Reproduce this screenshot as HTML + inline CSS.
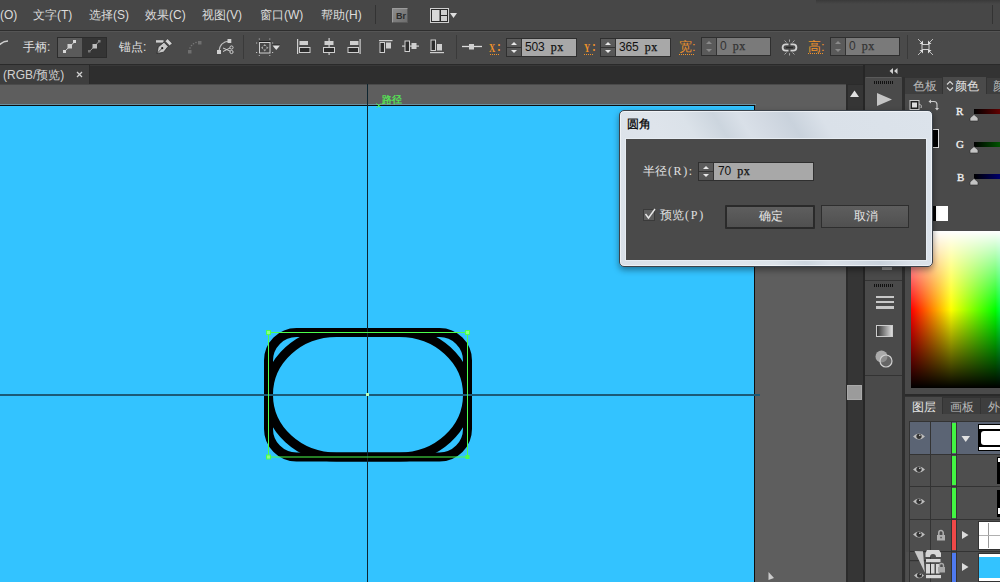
<!DOCTYPE html>
<html><head><meta charset="utf-8">
<style>
*{box-sizing:border-box}
html,body{margin:0;padding:0;width:1000px;height:582px;overflow:hidden;background:#474747;font-family:"Liberation Sans",sans-serif;}
.a{position:absolute}
svg{position:absolute;overflow:visible}
.mi{position:absolute;top:8px;font-size:12px;color:#dcdcdc;line-height:14px;white-space:nowrap}
.lab{position:absolute;font-size:12px;color:#e0e0e0;line-height:14px;white-space:nowrap}
.or{position:absolute;color:#f0922a;font-size:13px;line-height:14px;font-family:"Liberation Mono",monospace;font-weight:bold}
.dots{position:absolute;height:1px;background-image:linear-gradient(90deg,#f0922a 50%,transparent 50%);background-size:2px 1px}
.spin{position:absolute;height:19px;border:1px solid #2f2f2f;background:#a8a8a8}
.spin .b{position:absolute;left:0;top:0;width:15px;height:17px;background:linear-gradient(#5c5c5c 0,#585858 8px,#333 8px,#333 9px,#595959 9px,#555 17px);border-right:1px solid #333}
.spin .b:before{content:"";position:absolute;left:4px;top:3px;width:0;height:0;border-left:3.5px solid transparent;border-right:3.5px solid transparent;border-bottom:3.5px solid #e8e8e8}
.spin .b:after{content:"";position:absolute;left:4px;top:11px;width:0;height:0;border-left:3.5px solid transparent;border-right:3.5px solid transparent;border-top:3.5px solid #e8e8e8}
.spin.dis .b:before{border-bottom-color:#8a8a8a}
.spin.dis .b:after{border-top-color:#8a8a8a}
.spin .t{position:absolute;left:18px;top:1px;font-family:"Liberation Mono",monospace;font-size:12px;letter-spacing:-1px;color:#111;line-height:15px;white-space:pre}
.sep{position:absolute;width:1px;background:#363636}
.ic{fill:#cfcfcf;stroke:none}
</style></head><body>
<!-- ===== menu bar ===== -->
<div class="a" style="left:0;top:0;width:1000px;height:30px;background:#474747"></div>
<div class="a" style="left:0;top:30px;width:1000px;height:1px;background:#2e2e2e"></div>
<div class="a" style="left:0;top:31px;width:1000px;height:1px;background:#555"></div>
<div class="mi" style="left:0">(O)</div>
<div class="mi" style="left:33px">文字(T)</div>
<div class="mi" style="left:89px">选择(S)</div>
<div class="mi" style="left:145px">效果(C)</div>
<div class="mi" style="left:202px">视图(V)</div>
<div class="mi" style="left:260px">窗口(W)</div>
<div class="mi" style="left:321px">帮助(H)</div>
<div class="sep" style="left:375px;top:5px;height:19px;background:#333"></div>
<div class="a" style="left:816px;top:0;width:184px;height:4px;background:linear-gradient(#3a3a3a,#474747)"></div>
<div class="sep" style="left:992px;top:5px;height:19px;background:#333"></div>
<!-- Br -->
<div class="a" style="left:392px;top:8px;width:16px;height:15px;background:linear-gradient(135deg,#8c8c8c,#6e6e6e);border:1px solid #9c9c9c;border-right-color:#5a5a5a;border-bottom-color:#5a5a5a;border-radius:1px"></div>
<div class="a" style="left:396px;top:11px;font-size:9px;line-height:10px;color:#2a2a2a;font-weight:bold">Br</div>
<!-- layout -->
<svg style="left:430px;top:8px" width="30" height="16">
<rect x="0.5" y="0.5" width="18" height="14" fill="#2a2a2a" stroke="#cfcfcf"/>
<rect x="2" y="2" width="7.5" height="11" fill="#d8d8d8"/>
<rect x="11" y="2" width="6" height="5" fill="#cfcfcf"/>
<rect x="11" y="8" width="6" height="5" fill="#cfcfcf"/>
<path d="M20 5 L27 5 L23.5 10 Z" fill="#dedede"/>
</svg>
<!-- ===== control bar ===== -->
<div class="a" style="left:0;top:32px;width:1000px;height:32px;background:#4a4a4a"></div>
<div class="a" style="left:0;top:64px;width:1000px;height:1px;background:#2a2a2a"></div>
<svg style="left:0;top:38px" width="10" height="12"><path d="M-2 8 Q3 3 8 3" stroke="#cfcfcf" stroke-width="1.6" fill="none"/></svg>
<div class="lab" style="left:23px;top:40px">手柄:</div>
<div class="a" style="left:57px;top:37px;width:50px;height:21px;border:1px solid #2c2c2c;background:#353535"></div>
<div class="a" style="left:58px;top:38px;width:24px;height:19px;background:#5a5a5a"></div>
<svg style="left:58px;top:38px" width="50" height="19">
<path d="M6.5 13.5 L17 3.5" stroke="#cfcfcf" stroke-width="1"/>
<rect x="5" y="12" width="3" height="3" fill="#d8d8d8"/><rect x="9.5" y="6" width="4.5" height="4.5" fill="#cfcfcf"/><rect x="15" y="2" width="3" height="3" fill="#d8d8d8"/>
<path d="M31.5 13.5 L41 3.5" stroke="#9a9a9a" stroke-width="1"/>
<rect x="30" y="12" width="2.5" height="2.5" fill="#777"/><rect x="34.5" y="6" width="4.5" height="4.5" fill="#bdbdbd"/><rect x="40" y="2" width="2.5" height="2.5" fill="#888"/>
</svg>
<div class="lab" style="left:119px;top:40px">锚点:</div>
<!-- pen -->
<svg style="left:155px;top:38px" width="20" height="17">
<rect x="1" y="2.2" width="7.5" height="2.4" fill="#cfcfcf"/>
<path d="M2 15.5 L3.2 9 L9 4.2 L13.2 8.4 L8.6 14.2 Z" fill="#c8c8c8" stroke="#1e1e1e" stroke-width="0.7"/>
<path d="M2 15.5 L6.6 10.8" stroke="#333" stroke-width="0.8"/>
<circle cx="7.2" cy="10.2" r="1.1" fill="#1e1e1e"/>
<path d="M10 3.2 L12.6 0.8 L17.2 5.4 L14.6 7.8 Z" fill="#d2d2d2" stroke="#1e1e1e" stroke-width="0.5"/>
</svg>
<!-- dim curve -->
<svg style="left:187px;top:39px" width="18" height="16">
<rect x="1" y="11" width="3.5" height="3.5" fill="#6f6f6f"/><rect x="11" y="2" width="3.5" height="3.5" fill="#6f6f6f"/>
<circle cx="3" cy="9" r="0.8" fill="#777"/><circle cx="4.5" cy="6.5" r="0.8" fill="#777"/><circle cx="6.5" cy="4.7" r="0.8" fill="#777"/><circle cx="9" cy="3.5" r="0.8" fill="#777"/>
</svg>
<!-- scissors curve -->
<svg style="left:216px;top:38px" width="20" height="17">
<path d="M3 13 Q4 4 13 3" stroke="#bdbdbd" stroke-width="1.2" fill="none"/>
<rect x="1" y="12" width="4" height="4" fill="#d0d0d0"/><rect x="11.5" y="1" width="3.8" height="4" fill="#d0d0d0"/>
<circle cx="15.5" cy="9.5" r="1.6" stroke="#cfcfcf" stroke-width="1" fill="none"/><circle cx="15.5" cy="14" r="1.6" stroke="#cfcfcf" stroke-width="1" fill="none"/>
<path d="M7 10 L14 13 M7 13.5 L14 10" stroke="#cfcfcf" stroke-width="1"/>
</svg>
<div class="sep" style="left:243px;top:35px;height:24px;background:#3a3a3a"></div>
<!-- transform w/ dropdown -->
<svg style="left:256px;top:38px" width="26" height="18">
<path d="M3 3.5 H14.5" stroke="#222" stroke-width="1"/>
<rect x="3.5" y="4.5" width="10.5" height="10.5" fill="#474747" stroke="#cfcfcf" stroke-width="1"/>
<path d="M3.3 0.5 V1.6 M13.8 0.5 V1.6 M3.3 17 V18 M13.8 17 V18 M0 5 H1.2 M0 14.5 H1.2 M16 5 H17.2 M16 14.5 H17.2" stroke="#bdbdbd" stroke-width="1"/>
<path d="M8.75 6 L7.2 8 H10.3 Z M8.75 13.5 L7.2 11.5 H10.3 Z M5 9.75 L7 8.2 V11.3 Z M12.5 9.75 L10.5 8.2 V11.3 Z" fill="#aaa"/>
<path d="M16.5 7 H24" stroke="#222" stroke-width="1"/>
<path d="M16.5 7.5 H24 L20.25 12 Z" fill="#dedede"/>
</svg>
<!-- align left -->
<svg style="left:296px;top:38px" width="16" height="18">
<rect x="1" y="1" width="1.2" height="15" fill="#cfcfcf"/>
<rect x="3.5" y="3" width="8.5" height="4" fill="#cfcfcf"/>
<rect x="3.5" y="9.5" width="10.5" height="5" fill="#2c2c2c" stroke="#cfcfcf" stroke-width="1"/>
</svg>
<!-- align center h -->
<svg style="left:322px;top:38px" width="16" height="18">
<rect x="6.5" y="0" width="1.2" height="17" fill="#cfcfcf"/>
<rect x="2.5" y="3" width="9" height="4" fill="#cfcfcf"/>
<rect x="1.5" y="9.5" width="11" height="5" fill="#2c2c2c" stroke="#cfcfcf" stroke-width="1"/>
</svg>
<!-- align right -->
<svg style="left:347px;top:38px" width="16" height="18">
<rect x="12.5" y="1" width="1.2" height="15" fill="#cfcfcf"/>
<rect x="3" y="3" width="8.5" height="4" fill="#cfcfcf"/>
<rect x="1" y="9.5" width="10.5" height="5" fill="#2c2c2c" stroke="#cfcfcf" stroke-width="1"/>
</svg>
<!-- align top -->
<svg style="left:378px;top:39px" width="16" height="16">
<rect x="1" y="1" width="13.5" height="1.2" fill="#cfcfcf"/>
<rect x="2" y="3.5" width="4.5" height="10" fill="#2c2c2c" stroke="#cfcfcf" stroke-width="1"/>
<rect x="8" y="3.5" width="5" height="6" fill="#cfcfcf"/>
</svg>
<!-- align center v -->
<svg style="left:402px;top:39px" width="20" height="16">
<rect x="0" y="6.5" width="17" height="1.2" fill="#cfcfcf"/>
<rect x="3" y="2" width="4.5" height="10.5" fill="#2c2c2c" stroke="#cfcfcf" stroke-width="1"/>
<rect x="9.5" y="4" width="5" height="6" fill="#cfcfcf"/>
</svg>
<!-- align bottom -->
<svg style="left:429px;top:38px" width="16" height="17">
<rect x="1" y="14" width="14" height="1.2" fill="#cfcfcf"/>
<rect x="2" y="2" width="4.5" height="10.5" fill="#2c2c2c" stroke="#cfcfcf" stroke-width="1"/>
<rect x="8" y="6" width="5" height="6.5" fill="#cfcfcf"/>
</svg>
<div class="sep" style="left:456px;top:35px;height:24px;background:#3a3a3a"></div>
<!-- stroke -->
<svg style="left:461px;top:43px" width="22" height="8">
<path d="M1 3.5 H21" stroke="#dcdcdc" stroke-width="1.3"/>
<rect x="8" y="1" width="5" height="5.5" fill="#d0d0d0"/>
</svg>
<div class="or" style="left:489px;top:41px;font-family:'Liberation Serif',serif;font-size:12px;transform:scaleX(0.72);transform-origin:0 0">X</div><div class="or" style="left:495px;top:41px;font-weight:normal">:</div><div class="dots" style="left:490px;top:54px;width:10px"></div>
<div class="spin" style="left:506px;top:38px;width:71px"><div class="b"></div><div class="t"><span style="font-family:'Liberation Sans',sans-serif;letter-spacing:-0.2px">503</span> <span style="font-family:'Liberation Serif',serif;font-weight:normal;letter-spacing:0.5px;-webkit-text-stroke:0.25px currentColor">px</span></div></div>
<div class="or" style="left:584px;top:41px;font-family:'Liberation Serif',serif;font-size:12px;transform:scaleX(0.72);transform-origin:0 0">Y</div><div class="or" style="left:590px;top:41px;font-weight:normal">:</div><div class="dots" style="left:584px;top:54px;width:10px"></div>
<div class="spin" style="left:600px;top:38px;width:71px"><div class="b"></div><div class="t"><span style="font-family:'Liberation Sans',sans-serif;letter-spacing:-0.2px">365</span> <span style="font-family:'Liberation Serif',serif;font-weight:normal;letter-spacing:0.5px;-webkit-text-stroke:0.25px currentColor">px</span></div></div>
<div class="or" style="left:679px;top:40px;font-weight:normal;font-family:'Liberation Sans',sans-serif">宽:</div><div class="dots" style="left:679px;top:54px;width:16px"></div>
<div class="spin dis" style="left:701px;top:37px;width:70px;background:#7a7a7a"><div class="b" style="background:#5a5a5a"></div><div class="t" style="color:#333"><span style="font-family:'Liberation Sans',sans-serif;letter-spacing:-0.2px">0</span> <span style="font-family:'Liberation Serif',serif;font-weight:normal;letter-spacing:0.5px;-webkit-text-stroke:0.25px currentColor">px</span></div></div>
<!-- link -->
<svg style="left:781px;top:39px" width="18" height="17">
<path d="M7.5 5.3 H4.8 A3.2 3.2 0 0 0 4.8 11.7 H7.5 M9.5 5.3 H12.2 A3.2 3.2 0 0 1 12.2 11.7 H9.5" stroke="#d2d2d2" stroke-width="1.8" fill="none"/>
<path d="M5 8.5 H12" stroke="#2a2a2a" stroke-width="1.4"/>
<path d="M8.5 0.5 V2.8 M8.5 14.2 V16.5 M3.5 1.5 L5.5 3.5 M13.5 1.5 L11.5 3.5 M3.5 15.5 L5.5 13.5 M13.5 15.5 L11.5 13.5" stroke="#a5a5a5" stroke-width="1"/>
</svg>
<div class="or" style="left:808px;top:40px;font-weight:normal;font-family:'Liberation Sans',sans-serif">高:</div><div class="dots" style="left:808px;top:53px;width:16px"></div>
<div class="spin dis" style="left:830px;top:37px;width:70px;background:#7a7a7a"><div class="b" style="background:#5a5a5a"></div><div class="t" style="color:#333"><span style="font-family:'Liberation Sans',sans-serif;letter-spacing:-0.2px">0</span> <span style="font-family:'Liberation Serif',serif;font-weight:normal;letter-spacing:0.5px;-webkit-text-stroke:0.25px currentColor">px</span></div></div>
<div class="sep" style="left:907px;top:35px;height:24px;background:#3a3a3a"></div>
<!-- transform right -->
<svg style="left:917px;top:38px" width="18" height="18">
<rect x="5" y="6.5" width="7" height="5" fill="none" stroke="#cfcfcf" stroke-width="1"/>
<path d="M1 1 L5.5 5.5 M16 1 L11.5 5.5 M1 17 L5.5 12.5 M16 17 L11.5 12.5" stroke="#bdbdbd" stroke-width="1"/>
<path d="M2.5 6 L6 2.5 L6 6 Z M14.5 6 L11 2.5 L11 6 Z M2.5 12 L6 15.5 L6 12 Z M14.5 12 L11 15.5 L11 12 Z" fill="#dedede"/>
</svg>
<!-- CANVAS_START -->
<!-- ===== tab bar ===== -->
<div class="a" style="left:0;top:65px;width:863px;height:19px;background:#2e2e2e"></div>
<div class="a" style="left:0;top:65px;width:90px;height:19px;background:#3e3e3e;border-right:1px solid #2a2a2a"></div>
<div class="a" style="left:90px;top:65px;width:773px;height:1px;background:#383838"></div>
<div class="lab" style="left:3px;top:68px;color:#d2d2d2">(RGB/预览)</div>
<svg style="left:76px;top:71px" width="8" height="8"><path d="M1 1 L6 6 M6 1 L1 6" stroke="#cfcfcf" stroke-width="1.3"/></svg>
<!-- ===== pasteboard & artboard ===== -->
<div class="a" style="left:0;top:84px;width:847px;height:498px;background:#5e5e5e"></div>
<div class="a" style="left:0;top:84px;width:847px;height:1px;background:#4a4a4a"></div>
<div class="a" style="left:0;top:104px;width:756px;height:1px;background:#6a8fa0"></div>
<div class="a" style="left:0;top:105px;width:755px;height:477px;background:#33c3ff;border-top:1px solid #0d0d0d;border-right:1px solid #0d0d0d"></div>
<!-- guides -->


<!-- path label -->
<div class="a" style="left:382px;top:95px;font-size:10px;line-height:10px;color:#55ee55;-webkit-text-stroke:0.2px #55ee55">路径</div>
<svg style="left:375px;top:102px" width="8" height="8"><path d="M1.5 1.5 L6 6 M6 1.5 L1.5 6" stroke="#4cff4c" stroke-width="1"/></svg>
<!-- shape -->
<svg style="left:0;top:0" width="1000" height="582">
<rect x="268.5" y="332.5" width="199" height="124.5" rx="28" ry="28" fill="none" stroke="#000" stroke-width="9"/>
<rect x="268.5" y="332.5" width="199" height="124.5" rx="68" ry="62" fill="none" stroke="#000" stroke-width="9"/>
<path d="M0 395 H760" stroke="#1b5a77" stroke-width="2"/>
<path d="M367.5 84 V582" stroke="#0d2530" stroke-width="1"/>
<rect x="268.5" y="332.5" width="199" height="124.5" fill="none" stroke="#4cff4c" stroke-width="1"/>
<rect x="266.5" y="330.5" width="4" height="4" fill="#8aff8a" stroke="#4cff4c" stroke-width="1"/>
<rect x="465.5" y="330.5" width="4" height="4" fill="#8aff8a" stroke="#4cff4c" stroke-width="1"/>
<rect x="266.5" y="455" width="4" height="4" fill="#8aff8a" stroke="#4cff4c" stroke-width="1"/>
<rect x="465.5" y="455" width="4" height="4" fill="#4cff4c"/>
<rect x="366" y="393" width="3" height="3" fill="#b8ffb8"/>
<path d="M768.5 572 L768.5 580 L774 578 Z" fill="#ccc"/>
</svg>
<!-- ===== scrollbar ===== -->
<div class="a" style="left:846px;top:84px;width:17px;height:498px;background:#353535;border-left:2px solid #2b2b2b;border-top:1px solid #2b2b2b"></div>
<svg style="left:848px;top:87px" width="14" height="12"><path d="M2 10 L6.5 3.5 L11 10 Z" fill="#e0e0e0"/></svg>
<div class="a" style="left:847px;top:385px;width:15px;height:15px;background:#9b9b9b;border:1px solid #a9a9a9"></div>
<div class="a" style="left:863px;top:65px;width:2px;height:517px;background:#262626"></div>
<!-- ===== right dock ===== -->
<div class="a" style="left:865px;top:65px;width:135px;height:12px;background:#333"></div>
<svg style="left:889px;top:68px" width="10" height="7"><path d="M0.5 3 L4 0 V6 Z M5 3 L8.5 0 V6 Z" fill="#cfcfcf"/></svg>
<!-- icon column -->
<div class="a" style="left:865px;top:77px;width:37px;height:505px;background:#4a4a4a"></div>
<div class="a" style="left:866px;top:77px;width:35px;height:1px;background:#5a5a5a"></div>
<div class="a" style="left:874px;top:81px;width:20px;height:3px;background-image:linear-gradient(90deg,#111 50%,transparent 50%);background-size:2px 3px"></div>
<svg style="left:876px;top:92px" width="18" height="16"><path d="M1 1 L16 7.5 L1 14 Z" fill="#c4c4c4"/></svg>
<div class="a" style="left:902px;top:77px;width:3px;height:505px;background:#2e2e2e"></div>
<!-- icon column lower group -->
<div class="a" style="left:882px;top:262px;width:10px;height:8px;background:#8c8c8c"></div>
<div class="a" style="left:865px;top:280px;width:37px;height:1px;background:#333"></div>
<div class="a" style="left:874px;top:284px;width:20px;height:3px;background-image:linear-gradient(90deg,#111 50%,transparent 50%);background-size:2px 3px"></div>
<div class="a" style="left:876px;top:296px;width:18px;height:2px;background:#c8c8c8"></div>
<div class="a" style="left:876px;top:301px;width:18px;height:2px;background:#c8c8c8"></div>
<div class="a" style="left:876px;top:306px;width:18px;height:3px;background:#c8c8c8"></div>
<div class="a" style="left:876px;top:325px;width:17px;height:12px;background:linear-gradient(90deg,#333,#ddd);border:1px solid #ccc"></div>
<svg style="left:874px;top:349px" width="22" height="22">
<circle cx="7.5" cy="7.5" r="6" fill="#aaa"/>
<circle cx="12" cy="12" r="6" fill="rgba(120,120,120,0.6)" stroke="#d0d0d0" stroke-width="1.2"/>
</svg>
<div class="a" style="left:865px;top:375px;width:37px;height:1px;background:#333"></div>
<!-- ===== color panel ===== -->
<div class="a" style="left:905px;top:77px;width:95px;height:17px;background:#333"></div>
<div class="a" style="left:905px;top:78px;width:37px;height:16px;background:#3e3e3e"></div>
<div class="a" style="left:943px;top:77px;width:43px;height:17px;background:#4a4a4a"></div>
<div class="a" style="left:987px;top:78px;width:13px;height:16px;background:#3e3e3e"></div>
<div class="lab" style="left:913px;top:79px;color:#b9b9b9">色板</div>
<svg style="left:946px;top:80px" width="8" height="12"><path d="M1 4.5 L4 1.5 L7 4.5 M1 7.5 L4 10.5 L7 7.5" stroke="#d8d8d8" stroke-width="1.1" fill="none"/></svg>
<div class="lab" style="left:955px;top:79px;color:#e6e6e6">颜色</div>
<div class="lab" style="left:993px;top:79px;color:#b9b9b9">颜</div>
<div class="a" style="left:905px;top:94px;width:95px;height:300px;background:#4a4a4a"></div>
<!-- fill stroke small -->
<svg style="left:908px;top:99px" width="34" height="14">
<rect x="2" y="1.5" width="9" height="9" fill="#222" stroke="#ccc" stroke-width="1"/>
<rect x="4" y="3.5" width="5" height="5" fill="#ddd"/>
<path d="M11 5 A3 3 0 0 1 13 9" stroke="#ccc" fill="none"/>
<path d="M22 2.5 H26 A3 3 0 0 1 29 5.5 V10" stroke="#ccc" stroke-width="1.1" fill="none"/>
<path d="M20.5 2.5 L23 0.5 V4.5 Z M29 11.5 L27 9 H31 Z" fill="#ccc"/>
</svg>
<!-- big fill/stroke box (partially under dialog) -->
<div class="a" style="left:933px;top:129px;width:6px;height:19px;background:#000;border:1px solid #ddd;border-left:none"></div>
<div class="a" style="left:933px;top:206px;width:15px;height:15px;background:#fff;border-left:3px solid #000"></div>
<!-- RGB sliders -->
<div class="a" style="left:956px;top:105px;font-family:'Liberation Serif',serif;font-size:11px;color:#f2f2f2;line-height:12px;-webkit-text-stroke:0.3px #f2f2f2">R</div>
<div class="a" style="left:974px;top:109px;width:26px;height:5px;background:linear-gradient(90deg,#000,#620000)"></div>
<svg style="left:969px;top:114px" width="10" height="8"><path d="M1 7 L1 4 L5 0.5 L9 4 L9 7 Z" fill="#c4c4c4" stroke="#2a2a2a" stroke-width="0.6"/></svg>
<div class="a" style="left:956px;top:138px;font-family:'Liberation Serif',serif;font-size:11px;color:#f2f2f2;line-height:12px;-webkit-text-stroke:0.3px #f2f2f2">G</div>
<div class="a" style="left:974px;top:142px;width:26px;height:5px;background:linear-gradient(90deg,#000,#005400)"></div>
<svg style="left:969px;top:146px" width="10" height="8"><path d="M1 7 L1 4 L5 0.5 L9 4 L9 7 Z" fill="#c4c4c4" stroke="#2a2a2a" stroke-width="0.6"/></svg>
<div class="a" style="left:957px;top:171px;font-family:'Liberation Serif',serif;font-size:11px;color:#f2f2f2;line-height:12px;-webkit-text-stroke:0.3px #f2f2f2">B</div>
<div class="a" style="left:974px;top:174px;width:26px;height:5px;background:linear-gradient(90deg,#000,#00006c)"></div>
<svg style="left:969px;top:178px" width="10" height="8"><path d="M1 7 L1 4 L5 0.5 L9 4 L9 7 Z" fill="#c4c4c4" stroke="#2a2a2a" stroke-width="0.6"/></svg>
<!-- spectrum -->
<div class="a" style="left:911px;top:231px;width:89px;height:157px;background:linear-gradient(90deg,#ff0000 0%,#ffff00 45%,#00ff00 95%,#00ff40 100%)"></div>
<div class="a" style="left:911px;top:231px;width:89px;height:157px;background:linear-gradient(180deg,rgba(255,255,255,1) 0%,rgba(255,255,255,0) 50%,rgba(0,0,0,0) 50%,rgba(0,0,0,1) 100%)"></div>
<div class="a" style="left:905px;top:388px;width:95px;height:6px;background:#4a4a4a"></div>
<div class="a" style="left:905px;top:394px;width:95px;height:2px;background:#2a2a2a"></div>
<!-- ===== layers panel ===== -->
<div class="a" style="left:905px;top:396px;width:95px;height:18px;background:#333"></div>
<div class="a" style="left:905px;top:397px;width:37px;height:17px;background:#4a4a4a"></div>
<div class="a" style="left:943px;top:398px;width:37px;height:16px;background:#3e3e3e"></div>
<div class="a" style="left:981px;top:398px;width:19px;height:16px;background:#3e3e3e"></div>
<div class="lab" style="left:912px;top:400px;color:#e6e6e6">图层</div>
<div class="lab" style="left:950px;top:400px;color:#b9b9b9">画板</div>
<div class="lab" style="left:988px;top:400px;color:#b9b9b9">外</div>
<div class="a" style="left:905px;top:414px;width:95px;height:168px;background:#4a4a4a"></div>
<div class="a" style="left:910px;top:421px;width:90px;height:161px;background:#383838"></div>
<!-- rows -->
<div class="a" style="left:909px;top:421px;width:91px;height:161px;background:#333"></div>
<div class="a" style="left:910px;top:422px;width:90px;height:32px;background:#5b6474"></div>
<div class="a" style="left:910px;top:455px;width:90px;height:31px;background:#4e4e4e"></div>
<div class="a" style="left:910px;top:487px;width:90px;height:32px;background:#4e4e4e"></div>
<div class="a" style="left:910px;top:520px;width:90px;height:31px;background:#4e4e4e"></div>
<div class="a" style="left:910px;top:552px;width:90px;height:30px;background:#4e4e4e"></div>
<!-- column dividers -->
<div class="a" style="left:930px;top:421px;width:1px;height:161px;background:#333"></div>
<div class="a" style="left:951px;top:421px;width:1px;height:161px;background:#333"></div>
<div class="a" style="left:956px;top:421px;width:1px;height:161px;background:#333"></div>
<div class="a" style="left:952px;top:423px;width:4px;height:30px;background:#42f542"></div>
<div class="a" style="left:952px;top:456px;width:4px;height:29px;background:#42f542"></div>
<div class="a" style="left:952px;top:488px;width:4px;height:30px;background:#42f542"></div>
<div class="a" style="left:952px;top:520px;width:4px;height:30px;background:#f04848"></div>
<div class="a" style="left:952px;top:553px;width:4px;height:29px;background:#4f7af0"></div>
<!-- eyes -->
<svg style="left:0;top:0" width="1000" height="582">
<g id="eye"><path d="M913 436.5 Q919 430.5 925 436.5 Q919 442.5 913 436.5 Z" fill="#bdbdbd"/><circle cx="919" cy="436.3" r="2.6" fill="#333"/><circle cx="919.8" cy="435.3" r="0.8" fill="#ddd"/></g>
<use href="#eye" y="33"/><use href="#eye" y="65"/><use href="#eye" y="98"/>
<path d="M961.5 436 L970 436 L965.75 442 Z" fill="#e0e0e0"/>
<path d="M962 531 L968.5 535 L962 539 Z" fill="#dcdcdc"/>
<path d="M962 563 L968.5 567 L962 571 Z" fill="#dcdcdc"/>
<rect x="937" y="535" width="8" height="5.5" fill="#b0b0b0"/><path d="M938.8 535 V532.8 A2.2 2.2 0 0 1 943.2 532.8 V535" stroke="#b0b0b0" fill="none" stroke-width="1.5"/><rect x="940.3" y="536.8" width="1.5" height="1.5" fill="#555"/>
</svg>
<!-- thumbnails -->
<div class="a" style="left:978px;top:424px;width:22px;height:27px;background:#000"></div>
<div class="a" style="left:979px;top:425px;width:21px;height:4px;background:#fff"></div>
<div class="a" style="left:979px;top:447px;width:21px;height:3px;background:#fff"></div>
<div class="a" style="left:981px;top:431px;width:19px;height:14px;background:#fff;border-radius:3px 0 0 3px"></div>
<div class="a" style="left:997px;top:457px;width:3px;height:27px;background:#000"></div>
<div class="a" style="left:998px;top:458px;width:2px;height:4px;background:#fff"></div>
<div class="a" style="left:997px;top:490px;width:3px;height:27px;background:#000"></div>
<div class="a" style="left:998px;top:508px;width:2px;height:6px;background:#fff"></div>
<div class="a" style="left:978px;top:521px;width:22px;height:29px;background:#fff;border:1px solid #333;border-right:none"></div>
<div class="a" style="left:988px;top:523px;width:1px;height:25px;background:#9a9a9a"></div>
<div class="a" style="left:979px;top:535px;width:21px;height:1px;background:#b0b0b0"></div>
<div class="a" style="left:978px;top:553px;width:22px;height:29px;background:#fff;border:1px solid #333;border-right:none"></div>
<div class="a" style="left:979px;top:557px;width:21px;height:21px;background:#33c3ff"></div>
<!-- drag ghost -->
<svg style="left:0;top:0" width="1000" height="582">
<rect x="910" y="560" width="20" height="1" fill="#333"/>
<rect x="906" y="552" width="24" height="30" fill="#4e4e4e"/>
<rect x="909" y="552" width="1" height="30" fill="#333"/>
<rect x="910" y="560" width="20" height="1.2" fill="#333"/>
<path d="M914.5 551 L923 551.3 L924.8 572.5 Z" fill="#c8c8c8"/>
<path d="M914 575.5 Q919 570 924 575.5 Q919 581 914 575.5 Z" fill="#bdbdbd"/><circle cx="919.5" cy="575.3" r="2.5" fill="#333"/><circle cx="920.2" cy="574.3" r="0.7" fill="#ddd"/>
<path d="M927 550 H939 L941 553 V557 H925.5 V553 Z" fill="#d6d6d6"/>
<path d="M930 557 A3 3 0 0 1 936 557 Z" fill="#4e4e4e"/>
<rect x="926" y="559" width="14.5" height="3.2" fill="#d6d6d6"/>
<rect x="926" y="564" width="4" height="9.5" fill="#d6d6d6"/><rect x="931" y="564" width="3.5" height="9.5" fill="#d6d6d6"/><rect x="936" y="564" width="3.5" height="9.5" fill="#d6d6d6"/>
<rect x="938" y="567" width="7" height="5.5" fill="#a8a8a8"/><path d="M939.5 567 V565.5 A2 2 0 0 1 943.5 565.5 V567" stroke="#a8a8a8" stroke-width="1.4" fill="none"/>
<rect x="926" y="575" width="15" height="3.2" fill="#d6d6d6"/>
</svg>
<!-- DIALOG -->
<div class="a" style="left:619px;top:110px;width:314px;height:157px;border-radius:5px;border:1px solid #3c434b;background:linear-gradient(58deg,#d9e0e8 0%,#dee4eb 30%,#dbe2e9 38%,#ccd5de 46%,#d9e0e8 52%,#d3dae3 57%,#c9d2dc 64%,#dae1e9 72%,#dce3eb 100%);box-shadow:0 3px 6px rgba(0,0,0,0.4),inset 0 0 0 1px rgba(255,255,255,0.55)"></div>
<div class="a" style="left:625px;top:138px;width:302px;height:123px;border:1px solid #e6ecf2;background:#4a4a4a"></div>
<div class="lab" style="left:627px;top:117px;color:#000;-webkit-text-stroke:0.25px #000">圆角</div>
<div class="lab" style="left:643px;top:164px;color:#e0e0e0;font-size:12px">半径<span style="font-family:'Liberation Serif',serif;letter-spacing:1.6px;padding-left:1px">(R):</span></div>
<div class="spin" style="left:698px;top:162px;width:116px"><div class="b"></div><div class="t" style="left:19px;top:1px"><span style="font-family:'Liberation Sans',sans-serif;letter-spacing:-0.2px">70</span> <span style="font-family:'Liberation Serif',serif;font-weight:normal;letter-spacing:0.5px;-webkit-text-stroke:0.25px currentColor">px</span></div></div>
<!-- checkbox -->
<div class="a" style="left:643px;top:209px;width:12px;height:12px;background:#5e5e5e;border:1px solid #3a3a3a"></div>
<svg style="left:643px;top:207px" width="14" height="14"><path d="M2.5 7 L5.5 11 L12 2" stroke="#e8e8e8" stroke-width="1.4" fill="none"/></svg>
<div class="lab" style="left:660px;top:208px;color:#e0e0e0">预览<span style="font-family:'Liberation Serif',serif;letter-spacing:1.8px;padding-left:1px">(P)</span></div>
<!-- buttons -->
<div class="a" style="left:725px;top:205px;width:90px;height:24px;background:#2a2a2a;border-radius:1px"></div>
<div class="a" style="left:727px;top:207px;width:86px;height:20px;background:linear-gradient(#5e5e5e,#505050)"></div>
<div class="lab" style="left:759px;top:209px;color:#e6e6e6">确定</div>
<div class="a" style="left:821px;top:205px;width:88px;height:23px;background:linear-gradient(#5e5e5e,#505050);border:1px solid #2e2e2e"></div>
<div class="lab" style="left:854px;top:209px;color:#e6e6e6">取消</div>
</body></html>
